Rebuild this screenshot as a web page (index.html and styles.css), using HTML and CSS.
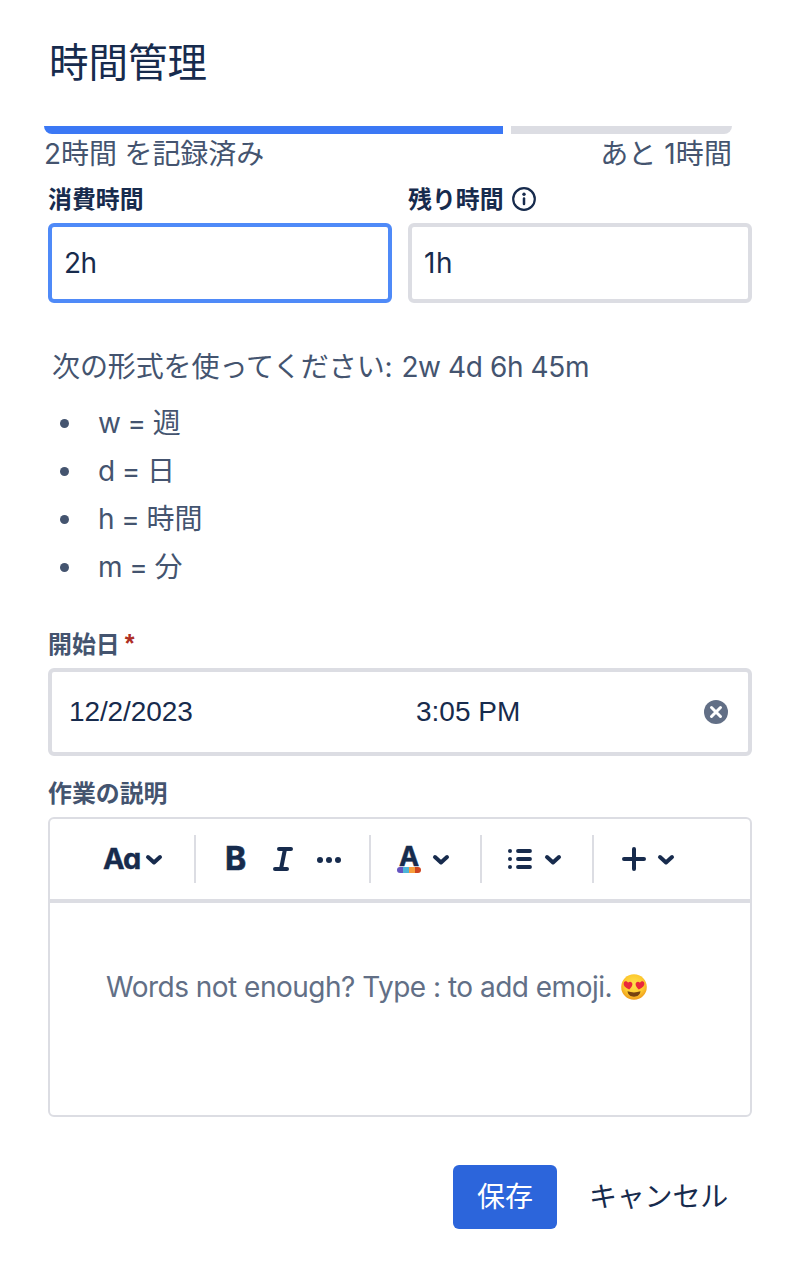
FILE: index.html
```html
<!DOCTYPE html>
<html lang="ja">
<head>
<meta charset="utf-8">
<title>時間管理</title>
<link rel="stylesheet" href="styles.css">
</head>
<body>
<main class="dialog">
  <h1 class="title">時間管理</h1>
  <section class="progress">
    <div class="bars"><div class="bar bar-logged"></div><div class="bar bar-left"></div></div>
    <div class="progress-text"><span class="logged">2時間 を記録済み</span><span class="remaining">あと 1時間</span></div>
  </section>
  <section class="fields">
    <div class="field">
      <div class="label strong">消費時間</div>
      <div class="input focused"><span class="value-spent">2h</span></div>
    </div>
    <div class="field">
      <div class="label strong">残り時間
        <svg class="info" viewBox="0 0 24 24"><circle cx="12" cy="12" r="10.8" fill="none" stroke="#172b4d" stroke-width="2.2"/><circle cx="12" cy="7.2" r="1.7" fill="#172b4d"/><path d="M12 11.500v5.600" stroke="#172b4d" stroke-width="2.5" stroke-linecap="round"/></svg>
      </div>
      <div class="input"><span class="value-left">1h</span></div>
    </div>
  </section>
  <p class="hint"><span class="hint-ja">次の形式を使ってください:</span> <span class="hint-en">2w 4d 6h 45m</span></p>
  <ul class="units">
    <li>w = 週</li>
    <li>d = 日</li>
    <li>h = 時間</li>
    <li>m = 分</li>
  </ul>
  <div class="label date-label">開始日<span class="required">*</span></div>
  <div class="datetime">
    <span class="date">12/2/2023</span>
    <span class="time">3:05 PM</span>
    <svg class="clear" viewBox="0 0 24 24"><circle cx="12" cy="12" r="12" fill="#626f86"/><path d="M7.500 7.500l9 9M16.500 7.500l-9 9" stroke="#fff" stroke-width="3" stroke-linecap="round"/></svg>
  </div>
  <div class="label desc-label">作業の説明</div>
  <section class="editor">
    <div class="toolbar">
      <div class="group group-style">
        <span class="aa">Aa</span>
        <svg class="chevron" viewBox="0 0 16 10"><path d="M2 2l6 5.500 6-5.500"/></svg>
      </div>
      <div class="group group-format">
        <span class="bold">B</span>
        <svg class="italic" viewBox="0 0 20 24"><path d="M6 2h12M2 22h12M12 2L8 22"/></svg>
        <svg class="more" viewBox="0 0 24 6"><circle cx="3" cy="3" r="3"/><circle cx="12" cy="3" r="3"/><circle cx="21" cy="3" r="3"/></svg>
      </div>
      <div class="group group-color">
        <div class="color"><span class="color-letter">A</span><span class="swatch"></span></div>
        <svg class="chevron" viewBox="0 0 16 10"><path d="M2 2l6 5.500 6-5.500"/></svg>
      </div>
      <div class="group group-list">
        <svg class="list" viewBox="0 0 24 20"><path d="M10 2h12M10 10h12M10 18h12"/><circle cx="2" cy="2" r="2"/><circle cx="2" cy="10" r="2"/><circle cx="2" cy="18" r="2"/></svg>
        <svg class="chevron" viewBox="0 0 16 10"><path d="M2 2l6 5.500 6-5.500"/></svg>
      </div>
      <div class="group group-insert">
        <svg class="plus" viewBox="0 0 24 24"><path d="M12 2v20M2 12h20"/></svg>
        <svg class="chevron" viewBox="0 0 16 10"><path d="M2 2l6 5.500 6-5.500"/></svg>
      </div>
    </div>
    <div class="content">
      <span class="placeholder">Words not enough? Type : to add emoji.</span>
      <svg class="emoji" viewBox="0 0 26 26">
        <defs><radialGradient id="face" cx=".5" cy=".4" r=".6"><stop offset="0" stop-color="#ffe34d"/><stop offset=".65" stop-color="#fdc92f"/><stop offset="1" stop-color="#ee9a1b"/></radialGradient></defs>
        <circle cx="13" cy="13" r="12.800" fill="url(#face)"/>
        <path d="M8.200 15.500C4 13.500 2.300 11.500 2.700 9.200C3.200 6.800 6 6.600 7 8.800C8.500 6.900 11.500 7.700 11.400 10.200C11.300 12.400 9.900 13.800 8.200 15.500Z" fill="#e9283b"/>
        <path d="M17.800 15.500C22 13.500 23.700 11.500 23.300 9.200C22.800 6.800 20 6.600 19 8.800C17.500 6.900 14.500 7.700 14.600 10.200C14.700 12.400 16.100 13.800 17.800 15.500Z" fill="#e9283b"/>
        <path d="M6.500 17.300Q13 19.500 19.500 17.300C19 21 16.500 22.700 13 22.700S7 21 6.500 17.300Z" fill="#76420f"/>
      </svg>
    </div>
  </section>
  <footer class="actions">
    <button class="save">保存</button>
    <button class="cancel">キャンセル</button>
  </footer>
</main>
</body>
</html>
```
FILE: styles.css
```css
* { box-sizing: border-box; }
body {
  margin: 0;
  background: #fff;
  color: #172b4d;
  font: 400 28px/32px Inter, "Noto Sans CJK JP", sans-serif;
}
svg { display: block; flex: none; overflow: visible; }
.dialog { height: 1274px; padding: 38px 36px 0 48px; overflow: hidden; }
.title { margin: 0; height: 88px; padding-left: 1px; font-size: 39.500px; font-weight: 400; line-height: 50px; }
.progress { width: 688px; margin-left: -4px; color: #44546f; }
.bars { display: flex; gap: 8px; height: 8px; }
.bar-logged { width: 459px; background: #3b78f5; border-radius: 0 0 0 8px; }
.bar-left { flex: 1; background: #dcdde3; border-radius: 0 0 8px 0; }
.progress-text { display: flex; justify-content: space-between; height: 50px; line-height: 40px; }
.logged { letter-spacing: -.1px; }
.remaining { letter-spacing: .1px; }
.fields { display: flex; gap: 16px; }
.field { flex: 1; }
.label { display: flex; align-items: center; height: 32px; padding-top: 2px; font-size: 23.900px; font-weight: 700; color: #44546f; }
.label.strong { color: #172b4d; height: 30px; margin-bottom: 9px; }
.info { width: 24px; height: 24px; margin: -3px 0 0 8px; }
.input { height: 80px; border: 4px solid #dcdde3; border-radius: 6px; padding: 20px 12px; }
.value-spent { letter-spacing: -.5px; }
.value-left { letter-spacing: .6px; }
.focused { border-color: #4f8af8; }
.hint { margin: 48px 0 0 4px; height: 48px; color: #44546f; line-height: 32px; white-space: nowrap; }
.hint-ja { letter-spacing: -.1px; }
.hint-en { margin-left: 1px; letter-spacing: -.4px; }
.units { margin: 0; padding: 0; list-style: none; color: #44546f; word-spacing: -1.200px; }
.units li { display: flex; align-items: center; height: 48px; padding-left: 12px; }
.units li::before { content: ""; width: 9px; height: 9px; margin-right: 29px; border-radius: 50%; background: #44546f; }
.date-label { margin-top: 37px; }
.required { height: 32px; margin-top: -4px; margin-left: 5px; color: #ae2e24; font-family: "Liberation Sans", sans-serif; font-size: 25px; }
.datetime { display: flex; align-items: center; height: 88px; margin-top: 8px; padding: 0 20px 0 17px; border: 4px solid #dcdde3; border-radius: 6px; font-family: "Liberation Sans", sans-serif; }
.date { width: 347px; letter-spacing: -.1px; }
.clear { width: 24px; height: 24px; margin-left: auto; }
.desc-label { margin-top: 21px; }
.editor { height: 300px; margin-top: 8px; border: 2px solid #dcdde3; border-radius: 6px; }
.toolbar { display: flex; align-items: center; height: 84px; border-bottom: 4px solid #dcdde3; }
.group { display: flex; align-items: center; height: 48px; border-right: 2px solid #dcdde3; }
.group:last-child { border-right: 0; }
.group-style { width: 146px; padding-left: 53px; }
.group-format { width: 175px; padding-left: 28px; }
.group-color { width: 111px; padding-left: 26px; }
.group-list { width: 112px; padding-left: 27px; }
.group-insert { padding-left: 28px; }
.aa { width: 38px; margin-right: 5px; font-size: 29px; font-weight: 700; letter-spacing: -1px; font-feature-settings: "cv11"; -webkit-text-stroke: .4px #172b4d; }
.chevron { width: 16px; height: 10px; margin-top: 1px; }
.chevron path, .italic path, .list path, .plus path { fill: none; stroke: #172b4d; stroke-width: 4; stroke-linecap: round; stroke-linejoin: round; }
.bold { width: 25px; padding-left: 1px; font-size: 32px; font-weight: 700; -webkit-text-stroke: .7px #172b4d; }
.italic { width: 20px; height: 24px; margin-left: 24px; }
.more { width: 24px; height: 6px; margin-top: 2px; margin-left: 24px; fill: #172b4d; }
.color { display: flex; flex-direction: column; align-items: center; width: 24px; height: 32px; margin-right: 12px; }
.color-letter { height: 24px; line-height: 27px; font-size: 27px; font-weight: 700; -webkit-text-stroke: .5px #172b4d; }
.swatch { width: 24px; height: 6px; border-radius: 3px; background: linear-gradient(90deg, #6554c0 25%, #4db5d8 25% 50%, #f79e3b 50% 75%, #cf4520 75%); }
.list { width: 24px; height: 20px; margin-right: 13px; margin-left: -1px; fill: #172b4d; }
.list path { stroke-width: 3.800; }
.plus { width: 24px; height: 24px; margin-right: 12px; }
.content { display: flex; align-items: center; padding: 68px 0 0 56px; color: #626f86; }
.placeholder { letter-spacing: -.510px; white-space: nowrap; }
.emoji { width: 26px; height: 26px; margin-left: 9px; }
.actions { display: flex; justify-content: flex-end; margin-top: 48px; gap: 8px; }
button { border: 0; height: 64px; padding: 0 24px; border-radius: 6px; font: inherit; white-space: nowrap; }
.save { width: 104px; color: #fff; background: #2c65db; }
.cancel { width: 187px; color: #172b4d; background: none; letter-spacing: -.2px; }
```
